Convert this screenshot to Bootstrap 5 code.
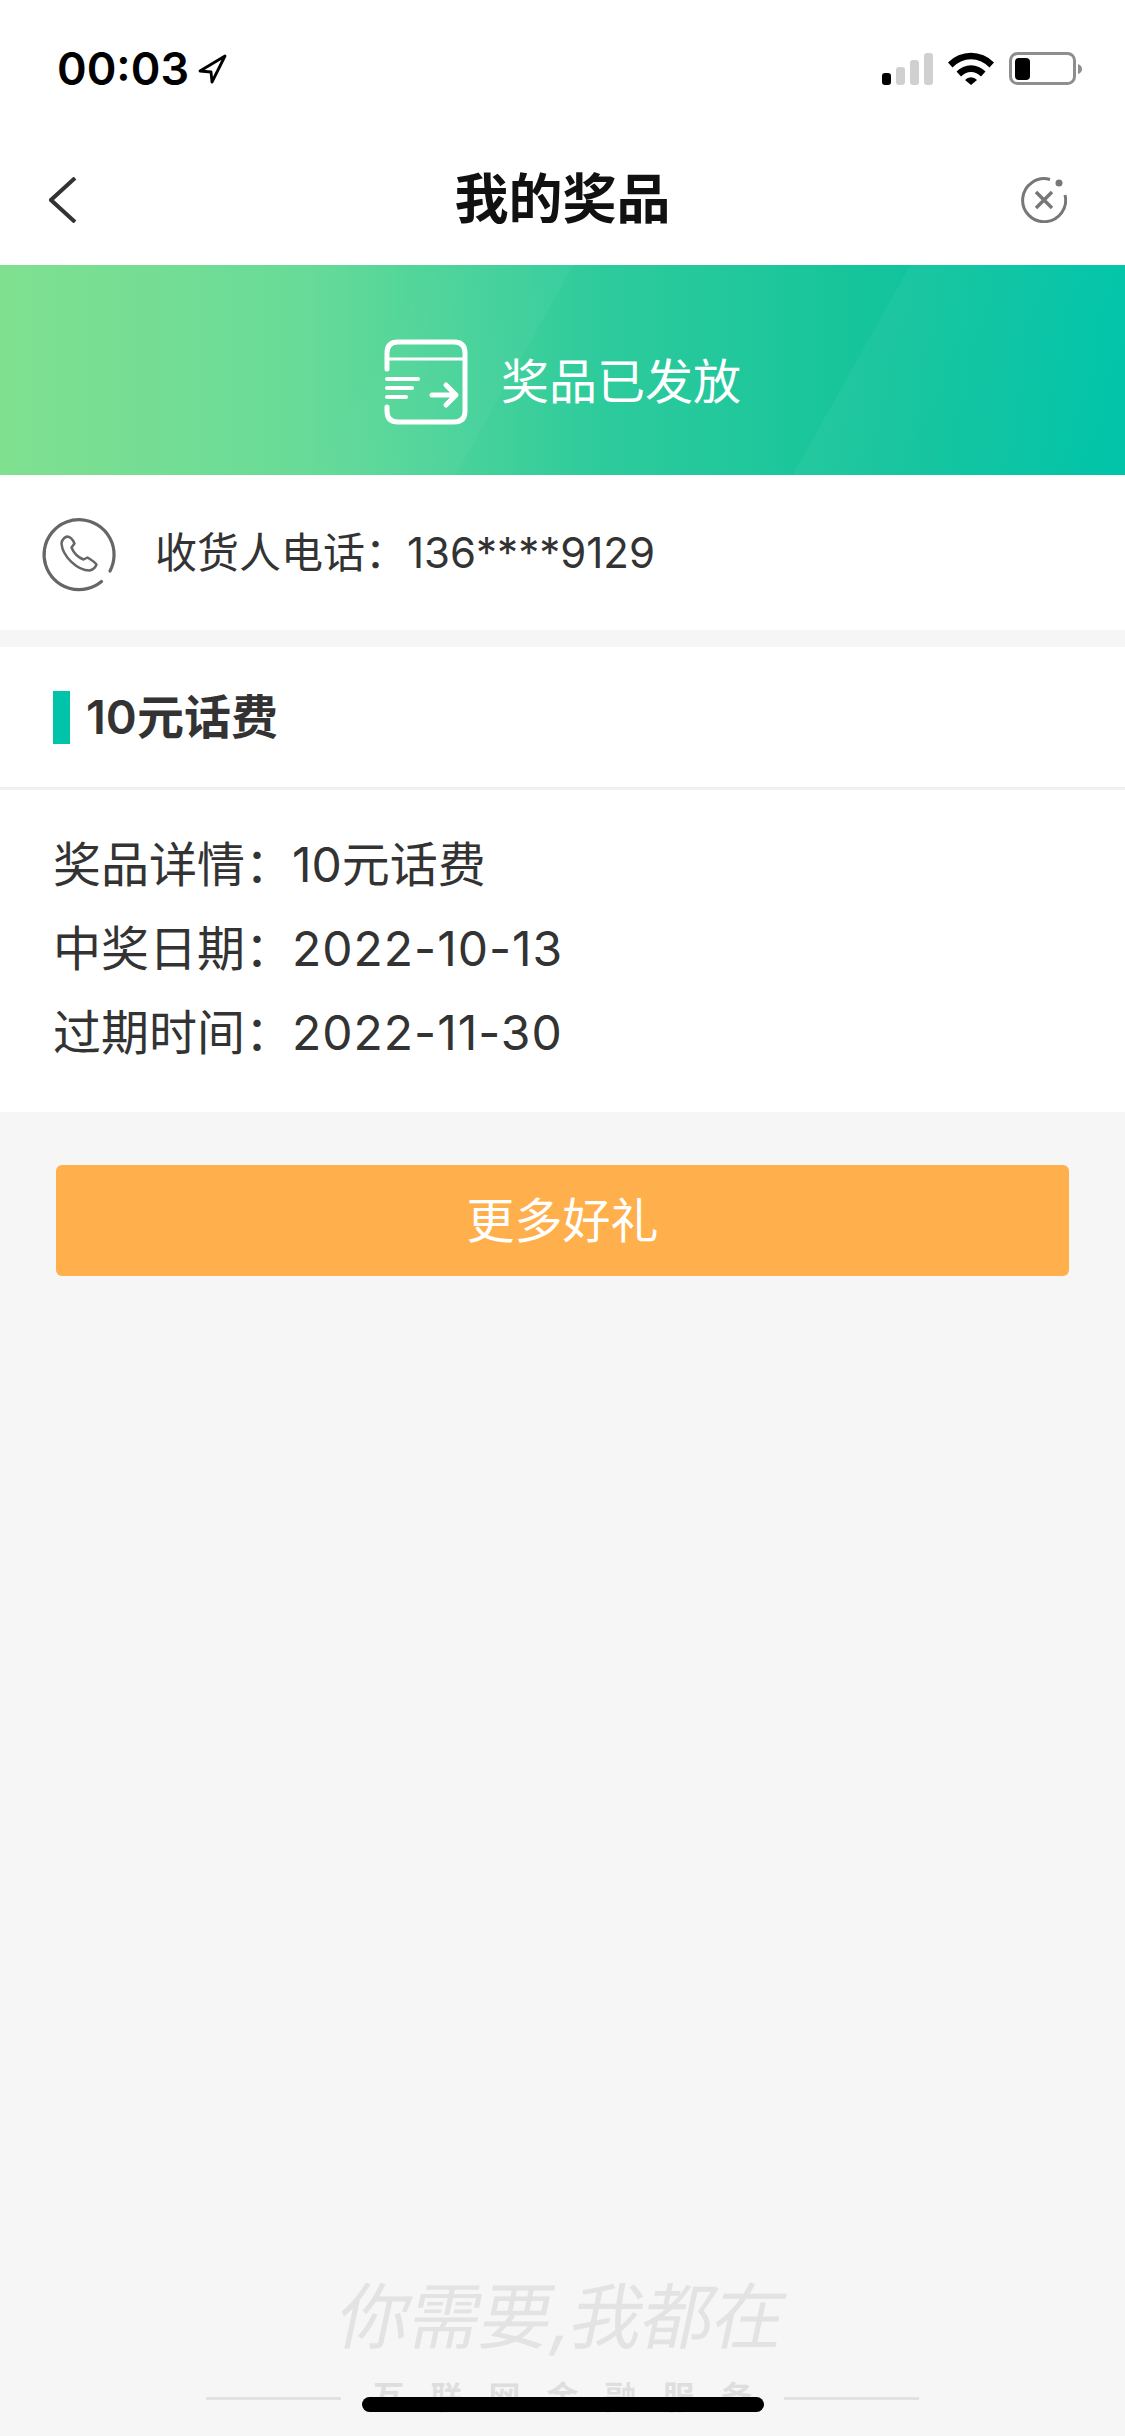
<!DOCTYPE html>
<html lang="zh">
<head>
    <meta charset="UTF-8">
    <meta name="viewport" content="width=device-width, initial-scale=1.0">
    <title>我的奖品</title>
    <link href="https://cdn.jsdelivr.net/npm/bootstrap@5.3.0/dist/css/bootstrap.min.css" rel="stylesheet">
    <style>
        body {
            background: #f6f6f6;
            color: #333;
            font-family: Inter, "Noto Sans CJK SC", sans-serif;
        }
        .phone-page { width: 1125px; height: 2436px; overflow: hidden; }
        .status-row { height: 135px; padding: 52px 43px 0 57px; }
        .clock { font-size: 45px; line-height: 33px; font-weight: 600; color: #000; }
        .nav-row { height: 130px; padding: 0 58px 0 49px; }
        .nav-title { font-size: 54px; font-weight: 600; color: #111; line-height: 1; }
        .banner-strip {
            height: 210px;
            padding-top: 24px;
            font-size: 48px;
            gap: 33px;
            background:
                linear-gradient(119.300deg, transparent 794px, rgba(255,255,255,.04) 794px, rgba(255,255,255,0) 1084px),
                linear-gradient(119.300deg, transparent 378px, rgba(255,255,255,.01) 378px, rgba(255,255,255,.03) 500px, transparent 500px),
                linear-gradient(90deg, #80e090 0%, #68db98 27%, #2ecb9c 53%, #14c49b 78%, #00c4a9 100%);
        }
        .tel-row { height: 155px; padding-left: 41px; font-size: 42px; margin-bottom: 17px; gap: 37px; }
        .tel-row svg { overflow: visible; }
        .prize-head { height: 143px; padding-left: 53px; font-size: 47px; font-weight: 600; border-bottom: 3px solid #f0f0f0; }
        .accent-tick { width: 17px; height: 53px; background: #00c4a9; }
        .prize-lines { height: 322px; padding: 33px 53px 0; font-size: 48px; line-height: 84px; white-space: nowrap; }
        .prize-lines .tag-cn { display: inline-block; width: 239px; }
        .date-val { letter-spacing: 1px; }
        .more-btn {
            height: 111px; margin: 53px 56px 0; font-size: 48px; border: 0; border-radius: 6px;
            background: #ffb04c; color: #fff;
        }
        .foot-mark { padding-bottom: 21px; }
        .hand-line { font-size: 72px; line-height: 106px; color: #e3e3e3; transform: skewX(-12deg); letter-spacing: -1px; }
        .foot-sub { margin-top: 11px; height: 34px; }
        .foot-rule { width: 135px; height: 3px; background: #e2e2e2; }
        .foot-text { width: 443px; text-align: center; font-size: 32px; line-height: 34px; font-weight: 700; letter-spacing: 26px; padding-left: 26px; color: #dedede; white-space: nowrap; }
        .home-bar { position: absolute; left: 362px; top: 2397px; width: 402px; height: 15px; border-radius: 8px; background: #000; }
    </style>
</head>
<body>
<div class="phone-page position-relative d-flex flex-column">
    <div class="bg-white">
        <div class="status-row d-flex justify-content-between align-items-start">
            <div class="d-flex align-items-center gap-2">
                <span class="clock">00:03</span>
                <svg width="30" height="30" viewBox="0 0 30 30"><path d="M28 2 3 17l11 1 1 10z" fill="none" stroke="#000" stroke-width="2.800" stroke-linejoin="round"/></svg>
            </div>
            <div class="d-flex align-items-start">
                <svg width="200" height="33" viewBox="0 0 200 33">
                    <rect x="0" y="21" width="9" height="12" rx="3" fill="#000"/>
                    <rect x="14" y="15" width="9" height="18" rx="3" fill="#d0d0d0"/>
                    <rect x="28" y="8" width="9" height="25" rx="3" fill="#d0d0d0"/>
                    <rect x="42" y="1" width="9" height="32" rx="3" fill="#d0d0d0"/>
                    <path d="M66 10.500a32 32 0 0 1 46 0l-4.500 5a25 25 0 0 0-37 0z" fill="#000"/>
                    <path d="M74.500 19.500a20 20 0 0 1 29 0l-4.500 5a13.500 13.500 0 0 0-20 0z" fill="#000"/>
                    <path d="M83 28a8 8 0 0 1 12 0l-6 5z" fill="#000"/>
                    <rect x="128.500" y="1.500" width="64" height="30" rx="7" fill="none" stroke="#8e8e8e" stroke-width="3"/>
                    <rect x="133" y="6" width="15" height="22" rx="4" fill="#000"/>
                    <path d="M196 12q4 1.500 4 5t-4 5z" fill="#8e8e8e"/>
                </svg>
            </div>
        </div>
        <div class="nav-row d-flex justify-content-between align-items-center">
            <svg width="55" height="46" viewBox="0 0 55 46"><path d="M26 1 2 23l24 22" fill="none" stroke="#333" stroke-width="4"/></svg>
            <div class="nav-title">我的奖品</div>
            <svg width="46" height="46" viewBox="0 0 46 46">
                <path d="M29 2.500A21.500 21.500 0 1 0 44 18" fill="none" stroke="#777" stroke-width="3"/>
                <path d="M15 15l16 16M31 15 15 31" stroke="#777" stroke-width="3.500" fill="none"/>
                <circle cx="38" cy="6" r="3.500" fill="#777"/>
            </svg>
        </div>
    </div>

    <div class="banner-strip d-flex justify-content-center align-items-center text-white">
        <svg width="84" height="86" viewBox="0 0 84 86" fill="none" stroke="#fff" stroke-width="5" stroke-linecap="round" stroke-linejoin="round">
            <path d="M3 30V14Q3 3 14 3H70Q81 3 81 14V72Q81 83 70 83H14Q3 83 3 72V68"/>
            <path d="M4 20H80" stroke-width="3"/>
            <path d="M3 40H34M3 49H28M3 58H22" stroke-width="4"/>
            <path d="M48 56H71M62 46l10 10-10 10"/>
        </svg>
        <span>奖品已发放</span>
    </div>

    <div class="tel-row bg-white d-flex align-items-center">
        <svg width="77" height="72" viewBox="0 0 77 72" fill="none" stroke="#666" stroke-width="3.200" stroke-linecap="round">
            <path d="M60.500 64.500A35 35 0 1 1 69 54"/>
            <path d="M26 19.500q-5 2-5.500 7c1 13 16 27 28 27q5-1 7-6q-1-2-9-7l-4 2c-5-2-10-7-12-12l3-4q-3-7-7.500-7z" stroke-width="2.500" stroke-linejoin="round"/>
        </svg>
        <span>收货人电话：136****9129</span>
    </div>

    <div class="prize-head bg-white d-flex align-items-center gap-3">
        <span class="accent-tick"></span>
        <span>10元话费</span>
    </div>
    <div class="prize-lines bg-white">
        <div><span class="tag-cn">奖品详情：</span>10元话费</div>
        <div><span class="tag-cn">中奖日期：</span><span class="date-val">2022-10-13</span></div>
        <div><span class="tag-cn">过期时间：</span><span class="date-val">2022-11-30</span></div>
    </div>

    <button type="button" class="btn more-btn">更多好礼</button>

    <div class="foot-mark mt-auto">
        <div class="hand-line text-center">你需要,我都在</div>
        <div class="foot-sub d-flex justify-content-center align-items-center">
            <span class="foot-rule"></span>
            <span class="foot-text">互联网金融服务</span>
            <span class="foot-rule"></span>
        </div>
    </div>
    <div class="home-bar"></div>
</div>
<script src="https://cdn.jsdelivr.net/npm/bootstrap@5.3.0/dist/js/bootstrap.bundle.min.js"></script>
</body>
</html>
